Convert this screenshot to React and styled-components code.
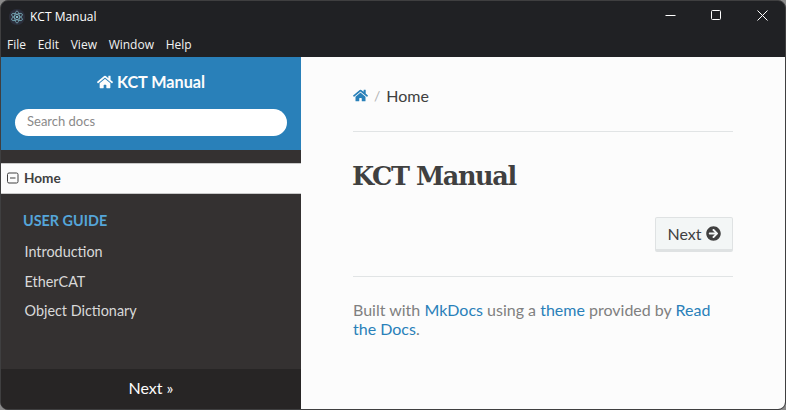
import React from "react";
import styled, { createGlobalStyle } from "styled-components";
import { FaHome, FaArrowCircleRight } from "react-icons/fa";

const Global = createGlobalStyle`
  html, body {
    margin: 0;
    padding: 0;
    background: #8a8a8a;
    overflow: hidden;
  }
  * { box-sizing: border-box; }
`;

const Window = styled.div`
  width: 786px;
  height: 410px;
  display: flex;
  flex-direction: column;
  background: #202124;
  border-radius: 8px;
  border: 1px solid #3f3f40;
  overflow: hidden;
  font-family: "Lato", sans-serif;
`;

const TitleBar = styled.div`
  height: 31px;
  flex: none;
  display: flex;
  align-items: center;
  padding-left: 8px;
  color: #fff;
  font: 12px "Open Sans", sans-serif;
`;

const AppIcon = styled.svg`
  width: 16px;
  height: 16px;
  margin-right: 5px;
`;

const Controls = styled.div`
  margin-left: auto;
  display: flex;
  height: 100%;
  padding-bottom: 2px;
`;

const Control = styled.div`
  width: 46px;
  height: 100%;
  display: flex;
  align-items: center;
  justify-content: center;
`;

const MenuBar = styled.div`
  height: 25px;
  flex: none;
  display: flex;
  align-items: center;
  gap: 11.7px;
  padding: 0 0 0 6px;
  color: #f2f2f2;
  font: 12px "Open Sans", sans-serif;
`;

const Body = styled.div`
  flex: 1;
  display: flex;
  min-height: 0;
`;

const Sidebar = styled.nav`
  width: 300px;
  flex: none;
  display: flex;
  flex-direction: column;
  background: #343131;
`;

const SearchArea = styled.div`
  height: 93px;
  flex: none;
  background: #2980b9;
  padding: 15px 14px 0;
  display: flex;
  flex-direction: column;
  align-items: center;
`;

const Brand = styled.div`
  color: #fcfcfc;
  font-size: 16.2px;
  font-weight: 700;
  line-height: 20px;
  display: flex;
  align-items: center;
  gap: 4px;
`;

const SearchBox = styled.div`
  width: 272px;
  height: 27px;
  margin-top: 17px;
  background: #fff;
  border-radius: 14px;
  color: #8a8a8a;
  font-size: 13px;
  line-height: 25px;
  padding-left: 12px;
`;

const CurrentItem = styled.div`
  margin-top: 13px;
  height: 31px;
  background: #fcfcfc;
  border-top: 1px solid #c9c9c9;
  border-bottom: 1px solid #c9c9c9;
  color: #404040;
  font-size: 13.6px;
  font-weight: 700;
  display: flex;
  align-items: center;
  padding: 0 0 2px 6px;
  gap: 5px;
`;

const Caption = styled.div`
  margin: 18px 0 0 22px;
  color: #55a5d9;
  font-size: 14.4px;
  font-weight: 700;
  line-height: 18px;
  text-transform: uppercase;
`;

const NavList = styled.div`
  margin-top: 7px;
  display: flex;
  flex-direction: column;
`;

const NavLink = styled.div`
  height: 29.5px;
  display: flex;
  align-items: center;
  padding-left: 23.5px;
  color: #d9d9d9;
  font-size: 14.4px;
`;

const SideFooter = styled.div`
  margin-top: auto;
  height: 40px;
  flex: none;
  background: #272525;
  color: #fcfcfc;
  font-size: 16px;
  display: flex;
  align-items: center;
  justify-content: center;
  padding-bottom: 3px;
`;

const Content = styled.main`
  flex: 1;
  background: #fcfcfc;
  padding: 27px 52px 0;
  color: #404040;
`;

const Crumbs = styled.div`
  height: 22px;
  display: flex;
  align-items: center;
  font-size: 16px;
  color: #404040;
`;

const CrumbSep = styled.span`
  color: #b3b3b3;
  margin: 0 6px 0 6px;
  font-size: 14px;
`;

const Rule = styled.hr`
  border: 0;
  height: 1px;
  background: #e1e4e5;
  margin: ${(p) => p.$margin};
`;

const Title = styled.h1`
  margin: 27px 0 0 -1px;
  font-family: "DejaVu Serif", serif;
  font-size: 25.5px;
  font-weight: 700;
  line-height: 34px;
  letter-spacing: -1.4px;
  color: #404040;
`;

const Pager = styled.div`
  margin-top: 24px;
  display: flex;
  justify-content: flex-end;
`;

const NextButton = styled.div`
  width: 78px;
  height: 35px;
  background: #f3f6f6;
  border: 1px solid #dfe2e3;
  border-bottom: 3px solid #dfe2e3;
  border-radius: 2px;
  color: #404040;
  font-size: 16px;
  display: flex;
  align-items: center;
  justify-content: center;
  gap: 4px;
`;

const FooterText = styled.p`
  margin: 23px 0 0;
  color: #808080;
  font-size: 16px;
  line-height: 19px;
`;

const Link = styled.a`
  color: #2980b9;
`;

const App = () => (
  <>
    <Global />
    <Window>
      <TitleBar>
        <AppIcon viewBox="0 0 16 16">
          <circle cx="8" cy="8" r="8" fill="#2b2e3b" />
          <g fill="none" stroke="#9feaf9" strokeWidth="0.7" opacity="0.75">
            <ellipse cx="8" cy="8" rx="6" ry="2.4" transform="rotate(30 8 8)" />
            <ellipse cx="8" cy="8" rx="6" ry="2.4" transform="rotate(90 8 8)" />
            <ellipse cx="8" cy="8" rx="6" ry="2.4" transform="rotate(150 8 8)" />
          </g>
          <circle cx="8" cy="8" r="1" fill="#9feaf9" />
        </AppIcon>
        KCT Manual
        <Controls>
          <Control>
            <svg width="11" height="11" viewBox="0 0 11 11">
              <path d="M0.5 5.5h10" stroke="#fff" strokeWidth="1" />
            </svg>
          </Control>
          <Control>
            <svg width="11" height="11" viewBox="0 0 11 11">
              <rect x="0.5" y="0.5" width="9" height="9" rx="1" fill="none" stroke="#fff" />
            </svg>
          </Control>
          <Control>
            <svg width="11" height="11" viewBox="0 0 11 11">
              <path d="M0.5 0.5l10 10M10.5 0.5l-10 10" stroke="#fff" strokeWidth="1" />
            </svg>
          </Control>
        </Controls>
      </TitleBar>
      <MenuBar>
        <span>File</span>
        <span>Edit</span>
        <span>View</span>
        <span>Window</span>
        <span>Help</span>
      </MenuBar>
      <Body>
        <Sidebar>
          <SearchArea>
            <Brand>
              <FaHome size={16} />
              KCT Manual
            </Brand>
            <SearchBox>Search docs</SearchBox>
          </SearchArea>
          <CurrentItem>
            <svg width="12" height="12" viewBox="0 0 12 12">
              <rect x="0.5" y="1" width="10.5" height="10" rx="1.5" fill="none" stroke="#404040" />
              <path d="M3 6h5.5" stroke="#404040" />
            </svg>
            Home
          </CurrentItem>
          <Caption>User Guide</Caption>
          <NavList>
            <NavLink>Introduction</NavLink>
            <NavLink>EtherCAT</NavLink>
            <NavLink>Object Dictionary</NavLink>
          </NavList>
          <SideFooter>Next »</SideFooter>
        </Sidebar>
        <Content>
          <Crumbs>
            <FaHome size={15} color="#2980b9" />
            <CrumbSep>/</CrumbSep>
            Home
          </Crumbs>
          <Rule $margin="25px 0 0" />
          <Title>KCT Manual</Title>
          <Pager>
            <NextButton>
              Next
              <FaArrowCircleRight size={15} />
            </NextButton>
          </Pager>
          <Rule $margin="24px 0 0" />
          <FooterText>
            Built with <Link>MkDocs</Link> using a <Link>theme</Link> provided by <Link>Read the Docs</Link>.
          </FooterText>
        </Content>
      </Body>
    </Window>
  </>
);

export default App;
